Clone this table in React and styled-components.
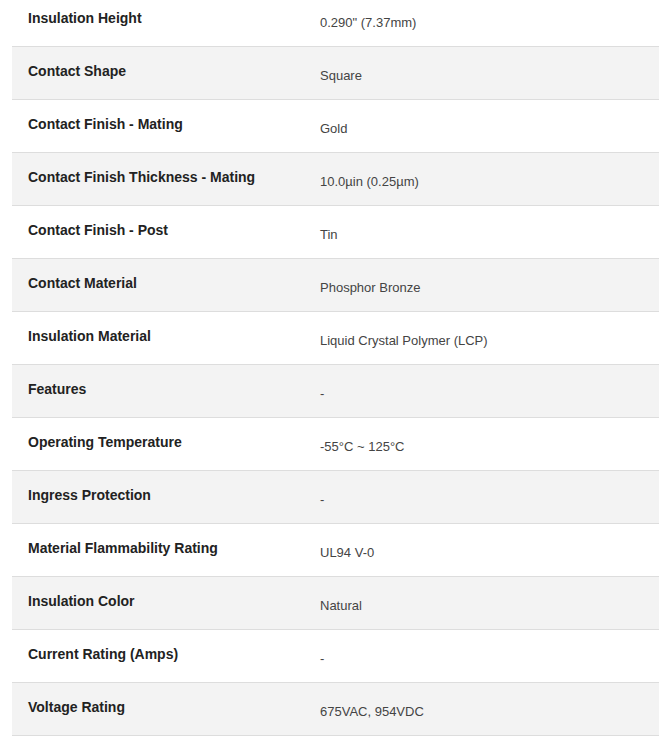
import React from "react";
import styled, { createGlobalStyle } from "styled-components";

const specs = [
  ["Insulation Height", "0.290\" (7.37mm)"],
  ["Contact Shape", "Square"],
  ["Contact Finish - Mating", "Gold"],
  ["Contact Finish Thickness - Mating", "10.0µin (0.25µm)"],
  ["Contact Finish - Post", "Tin"],
  ["Contact Material", "Phosphor Bronze"],
  ["Insulation Material", "Liquid Crystal Polymer (LCP)"],
  ["Features", "-"],
  ["Operating Temperature", "-55°C ~ 125°C"],
  ["Ingress Protection", "-"],
  ["Material Flammability Rating", "UL94 V-0"],
  ["Insulation Color", "Natural"],
  ["Current Rating (Amps)", "-"],
  ["Voltage Rating", "675VAC, 954VDC"],
];

const GlobalStyle = createGlobalStyle`
  body {
    margin: 0;
    background: #fff;
    font-family: "Liberation Sans", Arial, sans-serif;
    overflow: hidden;
  }
`;

const Page = styled.div`
  padding-left: 12px;
  margin-top: -6px;
`;

const SpecTable = styled.div`
  display: flex;
  flex-direction: column;
`;

const Row = styled.div`
  display: grid;
  grid-template-columns: 292px 1fr;
  height: 52px;
  border-bottom: 1px solid #dddddd;
  background: ${props => (props.shaded ? "#f3f3f3" : "#ffffff")};
`;

const Label = styled.div`
  padding: 16px 16px 0;
  font-size: 14px;
  line-height: 16px;
  font-weight: bold;
  color: #222222;
`;

const Value = styled.div`
  padding: 21px 16px 0;
  font-size: 13px;
  line-height: 16px;
  color: #444444;
`;

const App = () => {
  return (
    <Page>
      <GlobalStyle />
      <SpecTable>
        {specs.map(([label, value], i) => (
          <Row key={label} shaded={i % 2 === 1 ? 1 : 0}>
            <Label>{label}</Label>
            <Value>{value}</Value>
          </Row>
        ))}
      </SpecTable>
    </Page>
  );
};

export default App;
